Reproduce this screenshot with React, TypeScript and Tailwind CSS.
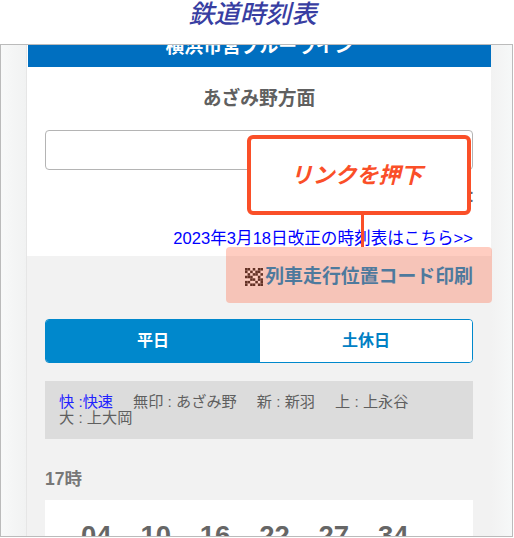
import React from "react";

const qr = [
  "1101011",
  "1010110",
  "0101101",
  "1110010",
  "0011011",
  "1100101",
  "1011011",
];

function QrIcon() {
  return (
    <svg width="18" height="18" viewBox="0 0 14 14" className="shrink-0 mr-[2px]">
      <rect width="14" height="14" fill="#fff" />
      {qr.map((row, y) =>
        row.split("").map((c, x) => (c === "1" ? <rect key={`${x}-${y}`} x={x * 2} y={y * 2} width="2" height="2" fill="#222" /> : null))
      )}
    </svg>
  );
}

export default function App() {
  return (
    <div className="relative w-[514px] h-[538px] bg-white overflow-hidden font-['Liberation_Sans','Noto_Sans_CJK_JP',sans-serif]">
      <h1 className="h-[44px] pr-[9px] text-center text-[25.6px] leading-[28px] italic font-medium text-[#383ea2]">鉄道時刻表</h1>

      <div className="flex w-[513px] h-[493px] border border-[#bbbbbb] overflow-hidden bg-[#f3f4f4]">
        <div className="w-[26px] shrink-0 bg-gradient-to-r from-[#f8f9f9] to-[#f1f2f2] border-r border-[#e6e6e6]" />
        <main className="w-[464px] shrink-0 flex flex-col bg-white">
          <div className="h-[22px] shrink-0 ml-[1px] bg-[#006fc0] flex items-start justify-center overflow-hidden">
            <span className="text-white font-bold text-[18.8px] leading-[24px] -mt-[10px]">横浜市営ブルーライン</span>
          </div>

          <section className="h-[189px] shrink-0 bg-white px-[18px] flex flex-col">
            <p className="mt-[19px] text-center text-[18.8px] leading-[26px] font-bold text-[#606060]">あざみ野方面</p>
            <div className="mt-[18px] h-[40px] rounded-[4px] border border-[#b4b4b4] bg-white" />
            <p className="mt-[19px] -mr-[6px] h-[16px] text-right text-[15px] leading-[16px] text-[#666]">：</p>
            <a className="mt-[24px] text-right text-[16.6px] leading-[20px] text-[#0000ff] whitespace-nowrap">2023年3月18日改正の時刻表はこちら&gt;&gt;</a>
          </section>

          <section className="flex-1 bg-[#f2f2f2] px-[18px] flex flex-col">
            <a className="mt-[7px] h-[28px] flex items-center justify-end text-[18.9px] leading-[28px] font-bold text-[#0088cc] whitespace-nowrap">
              <QrIcon />
              列車走行位置コード印刷
            </a>
            <div className="mt-[28px] h-[44px] shrink-0 flex rounded-[4px] border border-[#0088cc] overflow-hidden text-[16px] font-bold">
              <div className="w-[214px] shrink-0 bg-[#0088cc] text-white flex items-center justify-center">平日</div>
              <div className="flex-1 bg-white text-[#0080c4] flex items-center justify-center">土休日</div>
            </div>
            <div className="mt-[18px] h-[58px] shrink-0 bg-[#dcdcdc] px-[14px] pt-[13px] text-[15.2px] leading-[16px] text-[#5f5f5f]">
              <span className="text-[#2222ff]">快 :快速</span>
              <span className="ml-[20px]">無印 : あざみ野</span>
              <span className="ml-[20px]">新 : 新羽</span>
              <span className="ml-[20px]">上 : 上永谷</span>
              <br />
              大 : 上大岡
            </div>
            <p className="mt-[30px] text-[17.5px] leading-[20px] font-bold text-[#777777]">17時</p>
            <div className="mt-[11px] flex-1 bg-white pl-[36px] pt-[20px] flex items-start overflow-hidden">
              {["04", "10", "16", "22", "27", "34"].map((m) => (
                <span key={m} className="w-[59.4px] shrink-0 text-[27.5px] leading-[32px] font-bold text-[#666666]">{m}</span>
              ))}
            </div>
          </section>
        </main>
        <div className="flex-1 bg-gradient-to-r from-[#f2f2f2] to-[#f6f8f8]" />
      </div>

      {/* annotation overlay */}
      <div className="absolute left-[226px] top-[247px] w-[266px] h-[56px] rounded-[4px] bg-[#ff5a32]/30" />
      <div className="absolute left-[361px] top-[213px] w-[3px] h-[34px] bg-[#fa4f28]" />
      <div className="absolute left-[247px] top-[135px] w-[224px] h-[80px] rounded-[6px] border-4 border-[#fa4f28] bg-white flex items-center justify-center pr-[5px] text-[22px] font-bold italic text-[#fa4f28]">
        リンクを押下
      </div>
    </div>
  );
}
